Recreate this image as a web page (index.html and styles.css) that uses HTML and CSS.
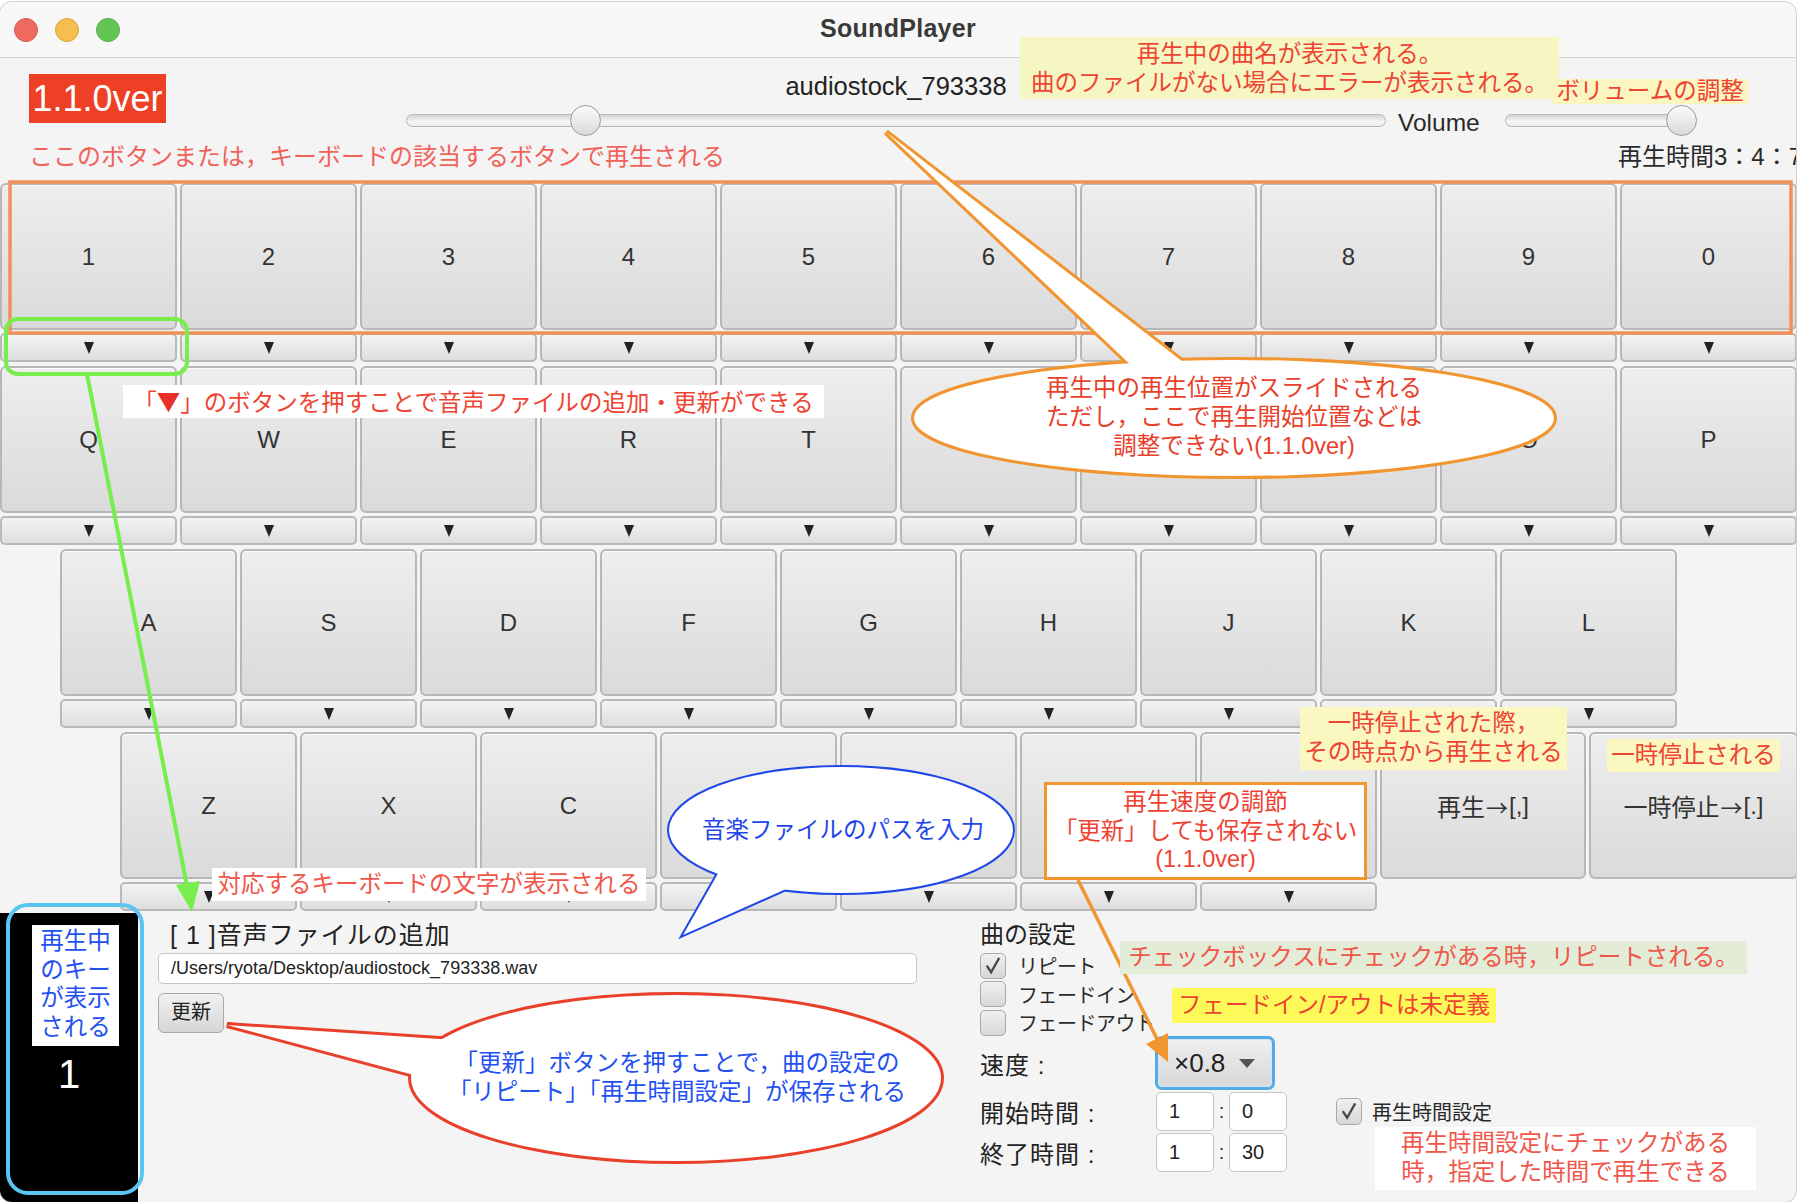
FILE: index.html
```html
<!DOCTYPE html>
<html lang="ja">
<head>
<meta charset="utf-8">
<title>SoundPlayer</title>
<link rel="stylesheet" href="styles.css">
</head>
<body>
<div class="window">
  <div class="titlebar">
    <div class="lights"><span class="light red"></span><span class="light yellow"></span><span class="light green"></span></div>
    <div class="title">SoundPlayer</div>
  </div>
  <div class="content">
    <div class="top-row">
      <div class="version">1.1.0ver</div>
      <div class="player">
        <div class="song">audiostock_793338</div>
        <div class="slider seek"><div class="track"></div><div class="thumb" style="left:164px"></div></div>
      </div>
      <div class="volume-label">Volume</div>
      <div class="slider vol"><div class="track"></div><div class="thumb" style="left:161px"></div></div>
    </div>
    <div class="info-row">
      <div class="hint">ここのボタンまたは，キーボードの該当するボタンで再生される</div>
      <div class="time">再生時間3：4：7</div>
    </div>

    <div class="keyboard">
      <div class="krow">
        <div class="keys">
          <div class="key">1</div><div class="key">2</div><div class="key">3</div><div class="key">4</div><div class="key">5</div><div class="key">6</div><div class="key">7</div><div class="key">8</div><div class="key">9</div><div class="key">0</div>
        </div>
        <div class="arrows">
          <div class="arrow"><i></i></div><div class="arrow"><i></i></div><div class="arrow"><i></i></div><div class="arrow"><i></i></div><div class="arrow"><i></i></div><div class="arrow"><i></i></div><div class="arrow"><i></i></div><div class="arrow"><i></i></div><div class="arrow"><i></i></div><div class="arrow"><i></i></div>
        </div>
      </div>
      <div class="krow">
        <div class="keys">
          <div class="key">Q</div><div class="key">W</div><div class="key">E</div><div class="key">R</div><div class="key">T</div><div class="key">Y</div><div class="key">U</div><div class="key">I</div><div class="key">O</div><div class="key">P</div>
        </div>
        <div class="arrows">
          <div class="arrow"><i></i></div><div class="arrow"><i></i></div><div class="arrow"><i></i></div><div class="arrow"><i></i></div><div class="arrow"><i></i></div><div class="arrow"><i></i></div><div class="arrow"><i></i></div><div class="arrow"><i></i></div><div class="arrow"><i></i></div><div class="arrow"><i></i></div>
        </div>
      </div>
      <div class="krow row3">
        <div class="keys">
          <div class="key">A</div><div class="key">S</div><div class="key">D</div><div class="key">F</div><div class="key">G</div><div class="key">H</div><div class="key">J</div><div class="key">K</div><div class="key">L</div>
        </div>
        <div class="arrows">
          <div class="arrow"><i></i></div><div class="arrow"><i></i></div><div class="arrow"><i></i></div><div class="arrow"><i></i></div><div class="arrow"><i></i></div><div class="arrow"><i></i></div><div class="arrow"><i></i></div><div class="arrow"><i></i></div><div class="arrow"><i></i></div>
        </div>
      </div>
      <div class="krow row4">
        <div class="keys">
          <div class="key">Z</div><div class="key">X</div><div class="key">C</div><div class="key">V</div><div class="key">B</div><div class="key">N</div><div class="key">M</div><div class="key play">再生<span class="arr">→</span>[,]</div><div class="key pause">一時停止<span class="arr">→</span>[.]</div>
        </div>
        <div class="arrows">
          <div class="arrow"><i></i></div><div class="arrow"><i></i></div><div class="arrow"><i></i></div><div class="arrow"><i></i></div><div class="arrow"><i></i></div><div class="arrow"><i></i></div><div class="arrow"><i></i></div>
        </div>
      </div>
    </div>

    <div class="bottom">
      <div class="keypanel"><div class="current-key">1</div></div>
      <div class="filepanel">
        <div class="file-title">[ 1 ]音声ファイルの追加</div>
        <div class="path-field">/Users/ryota/Desktop/audiostock_793338.wav</div>
        <div class="btn-update">更新</div>
      </div>
      <div class="settings">
        <div class="set-title">曲の設定</div>
        <div class="checks">
          <div class="check-row"><span class="cb checked"><svg viewBox="0 0 25 25"><path d="M6 12 L10.5 19 L19 4"/></svg></span>リピート</div>
          <div class="check-row"><span class="cb"></span>フェードイン</div>
          <div class="check-row"><span class="cb"></span>フェードアウト</div>
        </div>
        <div class="set-row speed">
          <div class="set-label">速度 :</div>
          <div class="combo"><div class="combo-inner">×0.8<i></i></div></div>
        </div>
        <div class="set-row time-row">
          <div class="set-label">開始時間 :</div>
          <div class="tfield">1</div><span class="colon">:</span><div class="tfield">0</div>
          <div class="time-check"><span class="cb checked"><svg viewBox="0 0 25 25"><path d="M6 12 L10.5 19 L19 4"/></svg></span>再生時間設定</div>
        </div>
        <div class="set-row time-row">
          <div class="set-label">終了時間 :</div>
          <div class="tfield">1</div><span class="colon">:</span><div class="tfield">30</div>
        </div>
      </div>
    </div>
  </div>
</div>

<div class="overlay">
  <svg class="shapes" width="1798" height="1202" viewBox="0 0 1798 1202">
    <rect x="10" y="182" width="1781" height="151" fill="none" stroke="#f0915a" stroke-width="3.5"/>
    <rect x="6" y="319" width="181" height="55" rx="12" fill="none" stroke="#78ee4c" stroke-width="4"/>
    <line x1="87" y1="374" x2="187" y2="886" stroke="#78ee4c" stroke-width="4"/>
    <polygon points="192,912 176,885 200,881" fill="#78ee4c"/>

    <polygon points="886,132 1138,372 1196,372" fill="#fff" stroke="#f0952f" stroke-width="6" stroke-linejoin="miter"/>
    <ellipse cx="1234" cy="418" rx="320" ry="58" fill="#fff" stroke="#f0952f" stroke-width="6"/>
    <polygon points="886,132 1138,372 1196,372" fill="#fff"/>
    <ellipse cx="1234" cy="418" rx="320" ry="58" fill="#fff"/>

    <polygon points="683,935 720,870 795,885" fill="#fff" stroke="#1f47e8" stroke-width="4"/>
    <ellipse cx="841" cy="830" rx="172" ry="63" fill="#fff" stroke="#1f47e8" stroke-width="4"/>
    <polygon points="683,935 720,870 795,885" fill="#fff"/>
    <ellipse cx="841" cy="830" rx="172" ry="63" fill="#fff"/>

    <line x1="1078" y1="880" x2="1160" y2="1045" stroke="#f0952f" stroke-width="3.5"/>
    <polygon points="1168,1062 1146,1044 1168,1033" fill="#f0952f"/>

    <rect x="8" y="905" width="134" height="288" rx="20" fill="none" stroke="#5bc5f2" stroke-width="4"/>

    <polygon points="227,1025 455,1040 414,1075" fill="#fff" stroke="#e8402a" stroke-width="6" stroke-linejoin="miter"/>
    <ellipse cx="676" cy="1078" rx="265" ry="83" fill="#fff" stroke="#e8402a" stroke-width="6"/>
    <polygon points="227,1025 455,1040 414,1075" fill="#fff"/>
    <ellipse cx="676" cy="1078" rx="265" ry="83" fill="#fff"/>
  </svg>

  <div class="note n-title">再生中の曲名が表示される。<br>曲のファイルがない場合にエラーが表示される。</div>
  <div class="note n-volume">ボリュームの調整</div>
  <div class="note n-arrow">「<b>▼</b>」のボタンを押すことで音声ファイルの追加・更新ができる</div>
  <div class="note n-slide">再生中の再生位置がスライドされる<br>ただし，ここで再生開始位置などは<br>調整できない(1.1.0ver)</div>
  <div class="note n-keychar">対応するキーボードの文字が表示される</div>
  <div class="note n-path">音楽ファイルのパスを入力</div>
  <div class="note n-speed">再生速度の調節<br>「更新」しても保存されない<br>(1.1.0ver)</div>
  <div class="note n-resume">一時停止された際，<br>その時点から再生される</div>
  <div class="note n-pause">一時停止される</div>
  <div class="note n-current">再生中<br>のキー<br>が表示<br>される</div>
  <div class="note n-update">「更新」ボタンを押すことで，曲の設定の<br>「リピート」「再生時間設定」が保存される</div>
  <div class="note n-repeat">チェックボックスにチェックがある時，リピートされる。</div>
  <div class="note n-fade">フェードイン/アウトは未定義</div>
  <div class="note n-timeset">再生時間設定にチェックがある<br>時，指定した時間で再生できる</div>
</div>
</body>
</html>
```

FILE: styles.css
```css
* { box-sizing: border-box; }
html, body { margin: 0; padding: 0; }
body {
  width: 1798px;
  height: 1202px;
  background: #ffffff;
  overflow: hidden;
  position: relative;
  font-family: "Liberation Sans", "Noto Sans CJK JP", sans-serif;
  color: #2a2a2a;
}

.window {
  width: 1796px;
  height: 1200px;
  margin-top: 2px;
  border-radius: 12px;
  background: #f4f4f4;
  box-shadow: 0 0 0 1px #cfcfcf;
  overflow: hidden;
}

.titlebar {
  height: 56px;
  background: #f7f7f7;
  border-bottom: 1px solid #d4d4d4;
  position: relative;
  display: flex;
  align-items: center;
  justify-content: center;
}
.lights {
  position: absolute;
  left: 14px;
  top: 16px;
  display: flex;
  gap: 17px;
}
.light { width: 24px; height: 24px; border-radius: 50%; display: block; }
.light.red { background: #ee6a5f; border: 1px solid #d95a50; }
.light.yellow { background: #f5be4f; border: 1px solid #dca53f; }
.light.green { background: #62c554; border: 1px solid #52ad45; }
.title {
  font-size: 25px;
  font-weight: bold;
  color: #3a3a3a;
  margin-top: -2px;
  letter-spacing: 0.3px;
}

/* top area */
.top-row { display: flex; align-items: flex-start; height: 85px; }
.version {
  margin: 16px 0 0 29px;
  width: 137px;
  height: 49px;
  background: #ee4027;
  color: #ffffff;
  font-size: 36px;
  line-height: 49px;
  text-align: center;
}
.player { margin-left: 240px; width: 980px; }
.song {
  margin-top: 14px;
  text-align: center;
  font-size: 25.5px;
  line-height: 28px;
  color: #222;
}
.slider { position: relative; height: 31px; }
.seek { margin-top: 5px; width: 980px; }
.vol { margin: 47px 0 0 25px; width: 191px; }
.track {
  position: absolute;
  left: 0; right: 0; top: 9px;
  height: 13px;
  border-radius: 7px;
  border: 1px solid #b8b8b8;
  background: linear-gradient(#d4d4d4, #f6f6f6 60%, #ececec);
}
.thumb {
  position: absolute;
  top: 0;
  width: 31px;
  height: 31px;
  border-radius: 50%;
  border: 1.5px solid #9a9a9a;
  background: linear-gradient(#fbfbfb, #dadada);
}
.volume-label {
  margin: 51px 0 0 12px;
  font-size: 24.5px;
  line-height: 28px;
  color: #2a2a2a;
}

.info-row {
  display: flex;
  justify-content: space-between;
  height: 28px;
  line-height: 28px;
  font-size: 24px;
}
.hint { padding-left: 29px; color: #f0625a; font-size: 24px; }
.time { width: 186px; margin-right: -8px; white-space: nowrap; color: #2a2a2a; }

/* keyboard */
.keyboard { margin-top: 12px; display: flex; flex-direction: column; gap: 4px; }
.krow { display: flex; flex-direction: column; gap: 3px; }
.row3 { margin-left: 60px; }
.row4 { margin-left: 120px; }
.keys, .arrows { display: flex; gap: 3px; }
.key {
  width: 177px;
  height: 147px;
  flex: none;
  border: 2px solid #b7b7b7;
  border-radius: 6px;
  background: linear-gradient(#eeeeee, #dadada);
  box-shadow: inset 0 1px 0 #fafafa;
  display: flex;
  align-items: center;
  justify-content: center;
  font-size: 24px;
  color: #333;
}
.key.play { width: 206px; }
.key.pause { width: 209px; }
.arr { font-family: "Noto Sans CJK JP", sans-serif; font-size: 22px; margin: 0 1px; }
.arrow {
  width: 177px;
  height: 29px;
  flex: none;
  border: 2px solid #b9b9b9;
  border-radius: 5px;
  background: linear-gradient(#f3f3f3, #dedede);
  display: flex;
  align-items: center;
  justify-content: center;
}
.arrow i {
  width: 0; height: 0;
  border-left: 5px solid transparent;
  border-right: 5px solid transparent;
  border-top: 12px solid #222;
}

/* bottom */
.bottom { display: flex; height: 291px; }
.keypanel {
  width: 138px;
  flex: none;
  margin-top: 2px;
  background: #000000;
}
.current-key {
  padding-top: 139px;
  text-align: center;
  color: #ffffff;
  font-size: 40px;
  line-height: 44px;
}
.filepanel { width: 779px; flex: none; padding: 10px 0 0 20px; }
.file-title { font-size: 25px; line-height: 28px; color: #222; letter-spacing: 1px; padding-left: 12px; }
.path-field {
  margin-top: 4px;
  height: 31px;
  background: #ffffff;
  border: 1.5px solid #c6c6c6;
  border-radius: 5px;
  font-size: 18px;
  line-height: 28px;
  padding-left: 12px;
  color: #222;
}
.btn-update {
  margin-top: 9px;
  width: 66px;
  height: 40px;
  border: 1.5px solid #a9a9a9;
  border-radius: 6px;
  background: linear-gradient(#f1f1f1, #d6d6d6);
  font-size: 20px;
  line-height: 37px;
  text-align: center;
  color: #222;
}

.settings { margin-left: 63px; padding-top: 10px; flex: 1; }
.set-title { font-size: 24px; line-height: 28px; color: #222; }
.checks { margin-top: 4px; display: flex; flex-direction: column; gap: 3.5px; }
.check-row {
  display: flex;
  align-items: center;
  height: 25px;
  font-size: 20px;
  color: #2a2a2a;
  letter-spacing: -0.5px;
}
.cb {
  width: 26px;
  height: 26px;
  flex: none;
  border: 1.5px solid #a9a9a9;
  border-radius: 5px;
  background: linear-gradient(#f0f0f0, #d7d7d7);
  margin-right: 12px;
  display: block;
}
.cb svg { width: 100%; height: 100%; display: block; }
.cb svg path { fill: none; stroke: #4a4a4a; stroke-width: 2.4; }

.set-row { display: flex; align-items: center; }
.set-label { width: 175px; flex: none; font-size: 24px; color: #222; letter-spacing: 1px; }
.speed { height: 54px; margin-top: 1px; }
.combo {
  width: 120px;
  height: 54px;
  border: 3px solid #55ace4;
  border-radius: 7px;
  background: #cfe6f6;
  padding: 1px;
}
.combo-inner {
  height: 100%;
  border-radius: 4px;
  background: linear-gradient(#efefef, #d8d8d8);
  display: flex;
  align-items: center;
  padding-left: 15px;
  font-size: 26px;
  color: #222;
}
.combo-inner i {
  margin-left: 14px;
  width: 0; height: 0;
  border-left: 8px solid transparent;
  border-right: 8px solid transparent;
  border-top: 9px solid #555;
}
.time-row { height: 39px; margin-top: 2px; }
.tfield {
  width: 58px;
  height: 39px;
  flex: none;
  background: #ffffff;
  border: 1.5px solid #c6c6c6;
  border-radius: 5px;
  font-size: 20px;
  line-height: 36px;
  padding-left: 12px;
  color: #222;
}
.set-label + .tfield { margin-left: 1px; }
.colon { width: 15px; text-align: center; font-size: 20px; color: #333; }
.time-check {
  margin-left: 49px;
  display: flex;
  align-items: center;
  font-size: 20px;
  color: #2a2a2a;
}
.time-check .cb { width: 26px; height: 27px; margin-right: 10px; }

/* overlay annotations */
.overlay {
  position: absolute;
  left: 0;
  top: 0;
  width: 1798px;
  height: 1202px;
  pointer-events: none;
}
.shapes { position: absolute; left: 0; top: 0; }
.note {
  position: absolute;
  font-size: 23.5px;
  line-height: 29px;
  color: #ee4433;
  white-space: nowrap;
  text-align: center;
}
.n-title { left: 1020px; top: 37px; width: 539px; height: 62px; padding-top: 3px; background: #f6f6c2; }
.n-volume { left: 1552px; top: 79px; width: 196px; height: 25px; line-height: 25px; background: #fbf6c0; }
.n-arrow { left: 123px; top: 385px; width: 701px; height: 33px; line-height: 33px; background: #ffffff; }
.n-arrow b { font-weight: normal; color: #e8302a; font-family: "Noto Sans CJK JP", sans-serif; }
.n-slide { left: 1034px; top: 374px; width: 400px; color: #e8402a; }
.n-keychar { left: 212px; top: 868px; width: 434px; height: 33px; line-height: 33px; background: #ffffff; color: #f0564a; }
.n-path { left: 700px; top: 816px; width: 286px; color: #1f47e8; }
.n-speed { left: 1044px; top: 782px; width: 323px; height: 98px; border: 3.5px solid #f0952f; background: #ffffff; padding-top: 3px; line-height: 28.5px; color: #ee4433; }
.n-resume { left: 1300px; top: 707px; width: 267px; height: 63px; padding-top: 2px; background: #fbf7c0; }
.n-pause { left: 1607px; top: 739px; width: 173px; height: 33px; line-height: 33px; background: #fbf7c0; }
.n-current { left: 32px; top: 925px; width: 87px; height: 121px; padding-top: 2px; line-height: 28.5px; background: #ffffff; color: #2350f0; }
.n-update { left: 437px; top: 1049px; width: 480px; color: #2350f0; }
.n-repeat { left: 1120px; top: 941px; width: 627px; height: 33px; line-height: 33px; background: #e2ecd6; color: #f0564a; }
.n-fade { left: 1172px; top: 988px; width: 324px; height: 35px; line-height: 35px; background: #fdf958; color: #ee4433; }
.n-timeset { left: 1375px; top: 1127px; width: 381px; height: 63px; padding-top: 2px; background: #ffffff; color: #f0564a; }
```
